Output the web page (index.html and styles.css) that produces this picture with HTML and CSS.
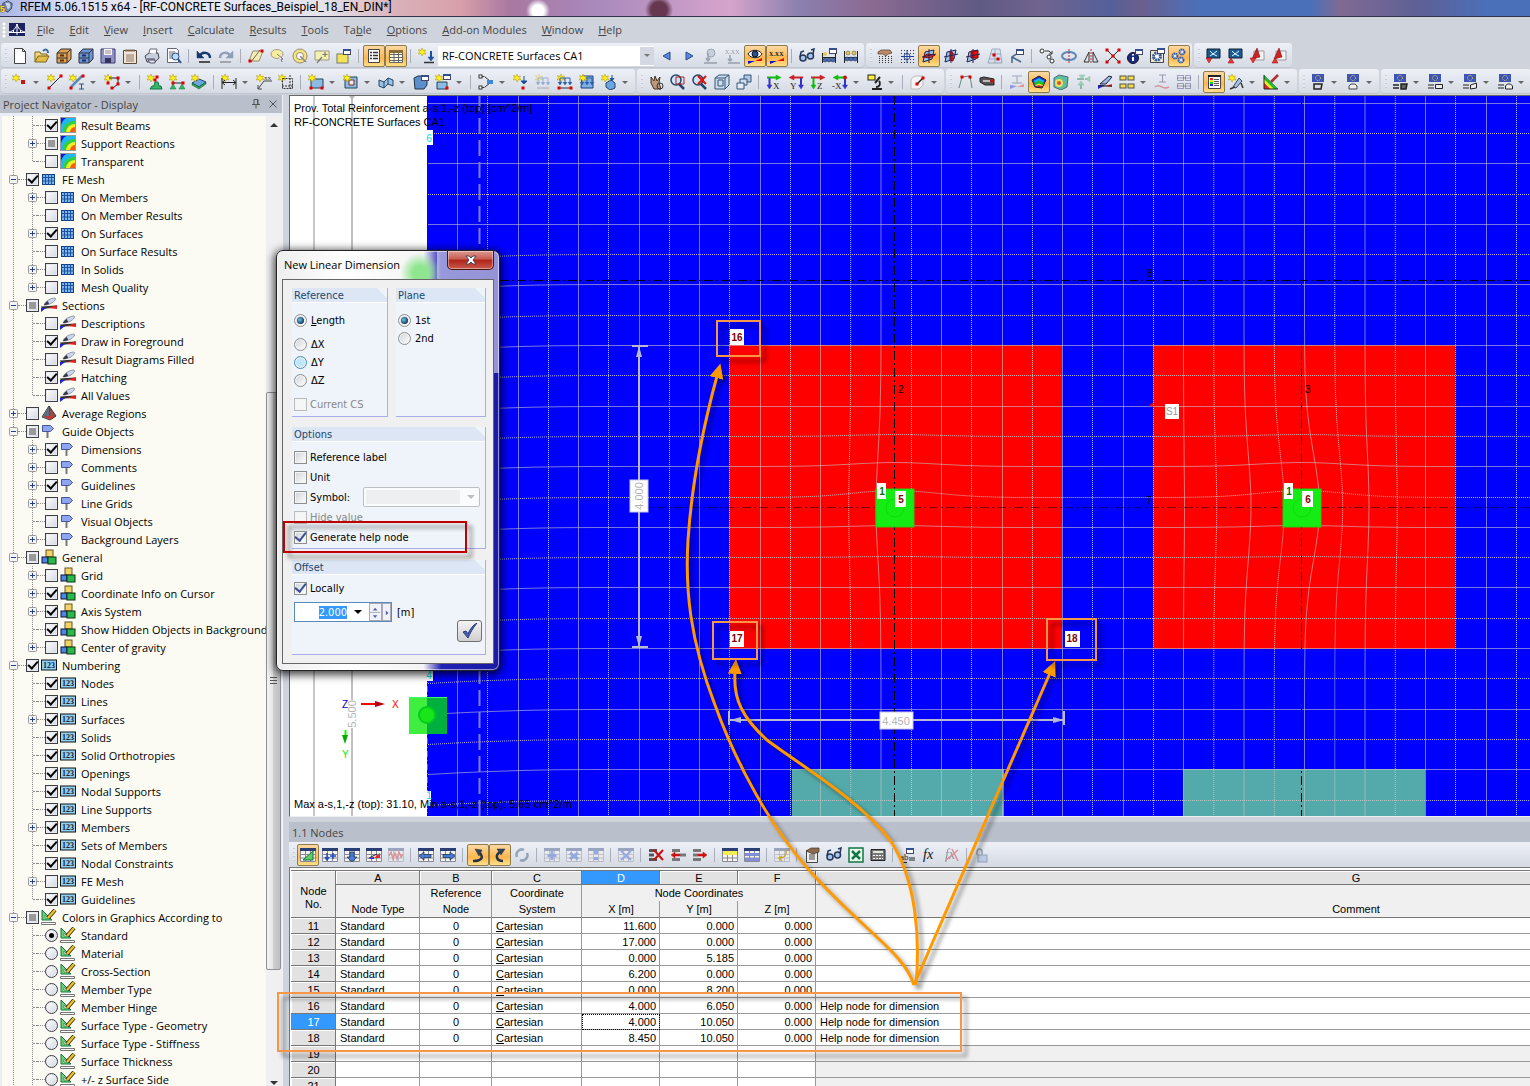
FILE: index.html
```html
<!DOCTYPE html>
<html lang="en">
<head>
    <meta charset="utf-8">
    <title>RFEM 5.06.1515 x64</title>
    <link rel="stylesheet" href="styles.css">
</head>
<body>
    <div class="app">
        <header class="titlebar">
            <svg class="logo" viewBox="0 0 16 16"><path d="M3 4l6-3 5 3-1 6-4 4-5-3z" fill="#6d87a8" stroke="#33475f"/><path d="M6 3l5 0 1 5-3 3z" fill="#c6d4e6"/><text x="0" y="14" class="logo-num">5</text></svg>
            <span>RFEM 5.06.1515 x64 - [RF-CONCRETE Surfaces_Beispiel_18_EN_DIN*]</span>
        </header>

        <nav class="menu">
            <span class="grip"></span>
            <svg class="menu-logo" viewBox="0 0 16 13"><rect width="16" height="13" fill="#1c2260"/><path d="M0 9.500h16M0 9C5 8 7 5 8 1c1 4 3 7 8 8M8 1v11M4.500 7v3M11.500 7v3" stroke="#fff" fill="none"/></svg>
            <a href="#"><u>F</u>ile</a>
            <a href="#"><u>E</u>dit</a>
            <a href="#"><u>V</u>iew</a>
            <a href="#"><u>I</u>nsert</a>
            <a href="#"><u>C</u>alculate</a>
            <a href="#"><u>R</u>esults</a>
            <a href="#"><u>T</u>ools</a>
            <a href="#">Ta<u>b</u>le</a>
            <a href="#"><u>O</u>ptions</a>
            <a href="#"><u>A</u>dd-on Modules</a>
            <a href="#"><u>W</u>indow</a>
            <a href="#"><u>H</u>elp</a>
        </nav>

        <div class="toolbars">
            <div class="toolbar-row">
                <div class="toolbar">
                    <span class="tools" data-icons="new open cabinet cabinetBlue save clip print preview | undo redo | selPlane selEllipse selRing selPlus selWin | *list *grid | loadcase"></span>
                    <select class="case" aria-label="Load case"><option>RF-CONCRETE Surfaces CA1</option></select>
                    <span class="tools" data-icons="prev next eyeOff xxOff *eye *xx | glasses abacusWin abacus"></span>
                </div>
                <div class="toolbar"><span class="tools" data-icons="handGrid snap *planeXY planeYZ planeXZ net wrenchWin | copyNode rotate mirror cross infoWin gearWin *gears"></span></div>
                <div class="toolbar"><span class="tools" data-icons="impBlue expBlue impRed expRed"></span></div>
            </div>
            <div class="toolbar-row">
                <div class="toolbar"><span class="tools" data-icons="node+ line member+ polygon+ | support supports slab | dim+ dimxx frame | surf+ opening+ wall+ solid boxes+ | connect+ loadNode loadMember loadLine loadSurf loadSolid+"></span></div>
                <div class="toolbar"><span class="tools" data-icons="pan zoomWin zoomOut cube cubes | axX axY axZ axNX+ scope+ | clipBox+"></span></div>
                <div class="toolbar"><span class="tools" data-icons="bent roller | section *surface solidRes arrows beamRes layout+ ibeam tables | *legend bulb+ colors+"></span></div>
                <div class="toolbar"><span class="tools" data-icons="ecA+ ecB+"></span></div>
                <div class="toolbar last"><span class="tools" data-icons="ecC+ ecD+ ecE+ ecF+"></span></div>
            </div>
        </div>

        <main class="workspace">
            <aside class="navigator">
                <div class="panel-title">
                    <h2>Project Navigator - Display</h2>
                    <button aria-label="Pin"><svg viewBox="0 0 10 10"><path d="M3 .5h4v5h-4zM1 5.500h8M5 5.500v4M6.500 1v4" stroke="#555" fill="none"/></svg></button>
                    <button aria-label="Close panel"><svg viewBox="0 0 10 10"><path d="M1.500 1.500l7 7M8.500 1.500l-7 7" stroke="#555" fill="none"/></svg></button>
                </div>
                <div class="tree-box">
                    <div class="tree" id="tree"></div>
                    <div class="scrollbar">
                        <span class="up"></span>
                        <span></span>
                        <span class="thumb"><i></i></span>
                        <span></span>
                        <span class="down"></span>
                    </div>
                </div>
            </aside>

            <div class="views">
                <section class="model">
                    <svg class="scene">
                        <g transform="translate(-290 -96)">
                            <rect x="427" y="96" width="3000" height="2000" fill="#00f"/>
                            <path d="M314.500 96v2000M313.500 96v2000" stroke="#c8c8c8"/>
                            <path d="M352 96v604M352 728v1000" stroke="#c0c0c0" stroke-width="2"/>
                            <path d="M349 96h6l-3 4z" fill="#b8b8b8"/>
                            <rect x="729" y="345" width="333" height="304" fill="#f00"/>
                            <rect x="1153" y="345" width="302" height="304" fill="#f00"/>
                            <rect x="792" y="769" width="212" height="60" fill="#54aaaa"/>
                            <rect x="1183" y="769" width="242" height="60" fill="#54aaaa"/>
                            <g id="mesh"></g>
                            <path d="M479.500 96v1000" class="guide"/>
                            <path d="M427.500 660v500" stroke="#0a4" stroke-dasharray="6 3 1 3"/>
                            <path d="M894.500 96v1000M1301.500 96v1000M500 280.500h3000" class="axis"/>
                            <path d="M640 507.500h3000" class="axis faint"/>

                            <g class="dimension">
                                <path d="M639 346v301M632 346h16M632 647h16M729 720h335M729 711v14M1064 711v14" class="bar"/>
                                <path d="M639 346l-3 11h6zM639 647l-3-11h6zM730 720l11-3v6zM1064 720l-11-3v6z"/>
                                <rect x="630" y="480" width="18" height="32"/>
                                <rect x="880" y="712" width="33" height="17"/>
                                <text x="896" y="725">4.450</text>
                                <text x="0" y="0" transform="translate(643 496) rotate(-90)">4.000</text>
                                <text x="0" y="0" transform="translate(356 714) rotate(-90)">5.500</text>
                            </g>

                            <g class="column">
                                <rect x="876" y="489" width="38" height="38"/>
                                <rect x="1283" y="489" width="38" height="38"/>
                                <circle cx="895" cy="508" r="9"/>
                                <circle cx="1302" cy="508" r="9"/>
                            </g>
                            <rect x="409" y="697" width="38" height="37" fill="#3fee3f"/>
                            <rect x="427" y="697" width="20" height="37" fill="#00b03f"/>
                            <path d="M409 697.500h38" stroke="#3f6"/>
                            <circle cx="427" cy="715" r="8" fill="#19e619" stroke="#0c2" stroke-width="2"/>

                            <g class="tag">
                                <rect x="730" y="329" width="14" height="16"/><text x="737" y="341">16</text>
                                <rect x="730" y="631" width="14" height="16"/><text x="737" y="642">17</text>
                                <rect x="1065" y="631" width="15" height="16"/><text x="1072" y="642">18</text>
                                <rect x="895" y="491" width="11" height="16"/><text x="901" y="503">5</text>
                                <rect x="1302" y="491" width="11" height="16"/><text x="1308" y="503">6</text>
                                <rect x="877" y="483" width="9" height="16"/><text x="882" y="495" class="green">1</text>
                                <rect x="1284" y="483" width="9" height="16"/><text x="1289" y="495" class="green">1</text>
                                <rect x="1165" y="404" width="14" height="15"/><text x="1172" y="415" class="gray">S1</text>
                                <rect x="426" y="130" width="7" height="15"/><text x="429" y="142" class="cyan">6</text>
                                <rect x="426" y="666" width="7" height="15"/><text x="429" y="679" class="cyan">4</text>
                                <rect x="426" y="791" width="5" height="15"/><text x="429" y="799" class="cyan">1</text>
                            </g>
                            <g class="axis-no">
                                <text x="898" y="393">2</text>
                                <text x="1305" y="393">3</text>
                                <text x="1147" y="277">8</text>
                                <text x="1146" y="504">7</text>
                            </g>
                            <path d="M1149 405l4-2v4z" fill="#f00"/>

                            <path d="M361 704h14" stroke="#f00" stroke-width="2"/>
                            <path d="M375 701l10 3-10 3z" fill="#b00"/>
                            <path d="M345.500 730v6" stroke="#0f0" stroke-width="2"/>
                            <path d="M342 735h6l-3 9z" fill="#0a0"/>
                            <g class="axis-name">
                                <text x="342" y="708" fill="#00c">Z</text>
                                <text x="392" y="708" fill="#f00">X</text>
                                <text x="342" y="758" fill="#0e0">Y</text>
                            </g>
                            <text x="294" y="112" class="note">Prov. Total Reinforcement a-s,1,-z (top) [cm^2/m]</text>
                            <text x="294" y="126" class="note">RF-CONCRETE Surfaces CA1</text>
                            <text x="294" y="808" class="note">Max a-s,1,-z (top): 31.10, Min a-s,1,-z (top): 5.65 cm^2/m</text>
                        </g>
                    </svg>
                </section>

                <section class="nodes">
                    <div class="panel-title"><h2>1.1 Nodes</h2></div>
                    <div class="toolbar table-tools"><span class="tools" data-icons="*tRuler tAdd tDown tFlag tWave | tLeft tRight | *arcA *arcB sync | tPlus tCross tMore | tX | rowDel rowLeft rowRight | tYellow tBlue | tEdit | handList glasses excel calc | ab fx fxDel | lock"></span></div>
                    <div class="table-box">
                        <table>
                            <colgroup><col class="c-no"><col class="c-a"><col class="c-b"><col class="c-c"><col class="c-n"><col class="c-n"><col class="c-n"><col class="c-g"></colgroup>
                            <thead>
                                <tr class="letters">
                                    <th rowspan="3" class="no-head">Node<br>No.</th>
                                    <th>A</th><th>B</th><th>C</th><th class="current">D</th><th>E</th><th>F</th><th>G</th>
                                </tr>
                                <tr class="names"><th></th><th>Reference</th><th>Coordinate</th><th colspan="3">Node Coordinates</th><th></th></tr>
                                <tr class="names"><th>Node Type</th><th>Node</th><th>System</th><th>X [m]</th><th>Y [m]</th><th>Z [m]</th><th>Comment</th></tr>
                            </thead>
                            <tbody id="rows"></tbody>
                        </table>
                    </div>
                </section>
            </div>
        </main>

        <form class="dialog">
            <div class="dialog-title">
                <h1>New Linear Dimension</h1>
                <button type="button" class="close" aria-label="Close"><svg viewBox="0 0 12 10"><path d="M1 1h3l2 2 2-2h3l-3 4 3 4h-3l-2-2-2 2h-3l3-4z" fill="#fff" stroke="#445"/></svg></button>
            </div>
            <div class="dialog-body">
                <div class="pair">
                    <fieldset>
                        <legend>Reference</legend>
                        <label><input type="radio" name="ref" checked> <span><u>L</u>ength</span></label>
                        <label class="spaced"><input type="radio" name="ref"> ΔX</label>
                        <label><input type="radio" name="ref" class="hot"> ΔY</label>
                        <label><input type="radio" name="ref"> ΔZ</label>
                        <label class="spaced off"><input type="checkbox" disabled> Current CS</label>
                    </fieldset>
                    <fieldset>
                        <legend>Plane</legend>
                        <label><input type="radio" name="plane" checked> 1st</label>
                        <label><input type="radio" name="plane"> 2nd</label>
                    </fieldset>
                </div>
                <fieldset class="options">
                    <legend>Options</legend>
                    <label><input type="checkbox"> Reference label</label>
                    <label><input type="checkbox"> Unit</label>
                    <div class="symbol">
                        <label><input type="checkbox"> Symbol:</label>
                        <select aria-label="Symbol" disabled></select>
                    </div>
                    <label class="off"><input type="checkbox" disabled> Hide value</label>
                    <label><input type="checkbox" checked> Generate help node</label>
                </fieldset>
                <fieldset class="offset">
                    <legend>Offset</legend>
                    <label><input type="checkbox" checked> Locally</label>
                    <div class="value">
                        <div class="value-box">
                            <input type="text" id="offset" value="2.000" aria-label="Offset">
                            <button type="button" class="drop" aria-label="Offset list"><svg viewBox="0 0 8 4"><path d="M0 0h8l-4 4z"/></svg></button>
                            <button type="button" class="spin" aria-label="Step offset"><svg viewBox="0 0 11 16"><path d="M0 8h11" stroke="#aab"/><path d="M3 6h5l-2.500-3zM3 11h5l-2.500 3z" fill="#5566a8"/></svg></button>
                            <button type="button" class="spin next" aria-label="More"><svg viewBox="0 0 8 16"><path d="M3 6v5l3-2.500z" fill="#5566a8"/></svg></button>
                        </div>
                        <span>[m]</span>
                    </div>
                    <button type="submit" class="ok" aria-label="OK"><svg viewBox="0 0 16 16"><path d="M1 9l3-1 2 3C8 6 11 2 15 0 11 5 8 10 6 15z" fill="#4763b8" stroke="#25387e"/></svg></button>
                </fieldset>
            </div>
        </form>

        <!-- callouts over the model, the dialog and the table -->
        <svg class="callouts">
            <defs>
                <marker id="head" markerUnits="userSpaceOnUse" markerWidth="16" markerHeight="16" refX="2" refY="7" orient="auto"><path d="M0 0l15 7-15 7z" fill="#f90"/></marker>
            </defs>
            <g class="arrows">
                <path d="M914 985C905 955 870 935 820 882C770 830 735 760 715 705C690 640 685 590 688 540C692 480 705 420 717 376"/>
                <path d="M916 985C920 940 917 880 890 840C860 800 800 765 767 740C743 718 733 700 735 672"/>
                <path d="M914 985L1050 673"/>
            </g>
            <g class="frames">
                <rect x="717" y="321" width="43" height="35"/>
                <rect x="713" y="622" width="44" height="37"/>
                <rect x="1047" y="619" width="49" height="41"/>
                <rect x="278" y="993" width="683" height="58"/>
                <rect x="284" y="522" width="182" height="30" class="red"/>
            </g>
        </svg>
    </div>

    <script src="script.js"></script>
</body>
</html>
```

FILE: styles.css
```css
* {
    box-sizing: border-box;
}

body {
    margin: 0;
    font-family: "Open Sans", "Noto Sans", sans-serif;
    font-size: 11px;
    color: #000;
    background: #cfd3dc;
}

button {
    padding: 0;
    border: 0;
    background: none;
}

h1, h2 {
    margin: 0;
    font-size: 11px;
    font-weight: normal;
}

.app {
    position: relative;
    display: flex;
    flex-direction: column;
    height: 100vh;
    overflow: hidden;
}

/* title and menu */
.titlebar {
    display: flex;
    align-items: center;
    gap: 6px;
    height: 17px;
    padding-bottom: 2px;
    border-bottom: 1px solid #333350;
    font: 12px/14px Roboto, "Open Sans", sans-serif;
    white-space: nowrap;
    background:
        radial-gradient(circle at 538px 11px, #fff 0, #fff 6px, transparent 12px),
        radial-gradient(circle at 659px 10px, #653850 0, #653850 8px, transparent 14px),
        linear-gradient(90deg, #a9b4e6 0, #d5d9f3 60px, #e6e8f4 120px, #e4e4ec 320px, #d9b0b8 400px, #d9a0aa 460px, #a878a0 510px, #a98abd 600px, #d6a4cc 730px, #8a80ae 800px, #8c6a92 870px, #5f5a84 980px, #70648f 1040px, #54609a 1110px, #6a5f8c 1140px, #4a70ba 1200px, #4a70ba 1310px, #7f6a93 1340px, #5e6096 1420px, #4a70ba 1490px);
}

.logo {
    width: 14px;
    height: 14px;
}

.logo-num {
    font: bold 10px "Liberation Sans", sans-serif;
    fill: #fd3;
    stroke: #652;
    stroke-width: 1px;
    paint-order: stroke;
}

.menu {
    display: flex;
    align-items: center;
    gap: 15px;
    height: 25px;
}

.menu a {
    color: #444;
    text-decoration: none;
}

.menu-logo {
    width: 16px;
    height: 13px;
    margin: 0 -3px 0 -14px;
}

.grip {
    width: 8px;
    height: 16px;
    background: radial-gradient(circle at 4px 2px, #fff 0, #fff 1px, transparent 2px) 0 0 / 8px 4px;
}

/* toolbars */
.toolbar-row {
    display: flex;
    gap: 2px;
    height: 26px;
    padding: 1px 0 0 1px;
}

.toolbar {
    display: flex;
    align-items: center;
    height: 25px;
    padding-right: 2px;
    border-radius: 3px;
    background: linear-gradient(#edf0f7, #d5dae3);
    box-shadow: inset 0 -1px #bec3ce;
}

.toolbar::before {
    content: "";
    width: 8px;
    height: 16px;
    background: linear-gradient(#fff, #b4b9c6) 4px 0 / 2px 2px no-repeat, linear-gradient(#fff, #b4b9c6) 4px 4px / 2px 2px no-repeat, linear-gradient(#fff, #b4b9c6) 4px 8px / 2px 2px no-repeat, linear-gradient(#fff, #b4b9c6) 4px 12px / 2px 2px no-repeat;
}

.toolbar.last {
    flex: 1;
}

.tools {
    display: flex;
    align-items: center;
}

.tool {
    display: flex;
    align-items: center;
    justify-content: center;
    width: 22px;
    height: 22px;
    border-radius: 2px;
}

.tool svg, .row svg {
    flex: none;
    width: 16px;
    height: 16px;
}

.tool.active {
    border: 1px solid #8f7a4a;
    background: linear-gradient(#fbd9a5, #ffb64c 60%, #ffe08c);
}

.arrow {
    width: 13px;
    height: 22px;
}

.arrow svg {
    width: 6px;
    height: 3px;
    display: block;
    margin: 2px 0 0 2px;
}

.sep {
    width: 1px;
    height: 14px;
    margin: 0 4px 0 3px;
    background: #a9aeba;
}

.case {
    width: 216px;
    height: 20px;
    margin: 0 2px 0 1px;
    padding: 0 4px;
    border: 0;
    appearance: none;
    font: inherit;
    color: #000;
    background: url("data:image/svg+xml,%3Csvg xmlns='http://www.w3.org/2000/svg' width='15' height='20'%3E%3Crect x='1' y='1' width='14' height='18' fill='%23d4d8e2'/%3E%3Cpath d='M5 8h6l-3 3z' fill='%23777'/%3E%3C/svg%3E") right no-repeat #fff;
}

/* workspace */
.workspace {
    flex: 1;
    display: grid;
    grid-template-columns: 283px minmax(0, 1fr);
    gap: 6px;
    min-height: 0;
    padding-top: 1px;
}

.panel-title {
    display: flex;
    flex: none;
    align-items: center;
    gap: 7px;
    height: 18px;
    padding: 0 4px 0 3px;
    background: #bac0cb;
    color: #444;
}

.panel-title h2 {
    flex: 1;
}

.panel-title button {
    width: 10px;
    height: 10px;
    line-height: 0;
}

.navigator {
    display: flex;
    flex-direction: column;
    min-height: 0;
    border-right: 1px solid #f0f2f8;
    background: #e9edf5;
}

.tree-box {
    display: flex;
    flex: 1;
    min-height: 0;
    margin: 3px 1px 0 2px;
}

.tree {
    flex: 1;
    min-width: 0;
    overflow: hidden;
    background: #fbfbf3;
}

.row {
    --dots: repeating-linear-gradient(#888 0 1px, transparent 1px 2px);
    display: flex;
    align-items: center;
    height: 18px;
    padding-left: 26px;
    white-space: nowrap;
    background: var(--dots) 11px 0 / 1px 100% no-repeat, var(--dots) 30px 0 / 1px 100% no-repeat;
}

.row.top {
    padding-left: 7px;
    background: var(--dots) 11px 0 / 1px 100% no-repeat;
}

.row.end {
    background: var(--dots) 11px 0 / 1px 100% no-repeat, var(--dots) 30px 0 / 1px 10px no-repeat;
}

.row::before {
    content: "";
    order: 1;
    flex: none;
    width: 8px;
    border-top: 1px dotted #888;
}

.row > .exp {
    flex: none;
    width: 9px;
    height: 9px;
    line-height: 0;
}

.row > .exp svg {
    width: 9px;
    height: 9px;
}

.row > .stub {
    flex: none;
    width: 4px;
    margin-left: 5px;
    border-top: 1px dotted #888;
}

.row input {
    order: 2;
}

.row svg.pic {
    order: 3;
    margin: 0 5px 0 2px;
}

.row label {
    order: 4;
}

.row input {
    appearance: none;
    flex: none;
    display: grid;
    place-items: center;
    width: 13px;
    height: 13px;
    margin: 0;
    border: 1px solid #3c3f44;
    background: linear-gradient(135deg, #fff, #d3d7e2);
    box-shadow: inset 0 0 0 1px #e8eaf0;
}

.row input[type="radio"] {
    border-radius: 50%;
}

.row input[type="radio"]:checked::after {
    content: "";
    width: 5px;
    height: 5px;
    border-radius: 50%;
    background: #000;
}

.row input[type="checkbox"]:checked::after {
    content: "";
    width: 8px;
    height: 4px;
    margin-top: -3px;
    border: solid #000;
    border-width: 0 0 2px 2px;
    transform: rotate(-48deg);
}

.row input.mixed::after {
    content: "";
    width: 7px;
    height: 7px;
    background: #999;
}

.scrollbar {
    display: grid;
    grid-template-rows: 17px 258fr 575fr 108fr 7px;
    width: 15px;
    background: #f0f0f0;
}

.up, .down {
    justify-self: center;
    align-self: center;
    border: solid transparent;
    border-width: 0 4px 4px;
    border-bottom-color: #333;
}

.down {
    border-width: 4px 4px 0;
    border-top-color: #333;
}

.thumb {
    display: grid;
    place-items: center;
    border: 1px solid #8e9196;
    border-radius: 2px;
    background: linear-gradient(90deg, #f4f4f4, #e6e6e6 45%, #cfcfd2 50%, #bfc0c4);
}

.thumb i {
    width: 7px;
    height: 8px;
    background: repeating-linear-gradient(#555 0 1px, transparent 1px 3px);
}

.views {
    display: grid;
    grid-template-rows: minmax(0, 1fr) 264px;
    gap: 5px;
    min-height: 0;
}

/* model view */
.model {
    border: 1px solid #666;
    border-right: 0;
    border-bottom-color: #eee;
    background: #fff;
    min-height: 0;
}

.scene {
    display: block;
    width: 100%;
    height: 100%;
}

#mesh path {
    fill: none;
    stroke: #c4c4c4;
    stroke-opacity: .6;
}

#mesh path.dotted {
    stroke-opacity: .95;
    stroke-dasharray: 1 1;
}

.guide {
    stroke: #8080e4;
    stroke-width: 2;
    stroke-dasharray: 16 6;
}

.axis {
    fill: none;
    stroke: #000;
    stroke-dasharray: 9 3 2 3;
}

.axis.faint {
    stroke-opacity: .5;
}

.scene text {
    font-family: "Liberation Sans", Arial, sans-serif;
    font-size: 11px;
}

.dimension path {
    fill: #b9b9d2;
}

.dimension .bar {
    stroke: #b9b9d2;
    stroke-width: 2;
}

.dimension rect {
    fill: #fff;
    stroke: #c8c8e0;
}

.dimension text {
    fill: #b4b4b4;
    text-anchor: middle;
}

.column rect {
    fill: #14ec14;
    stroke: #2cc811;
}

.column circle {
    fill: none;
    stroke: #0ddc0d;
}

.tag rect {
    fill: #fff;
}

.tag text {
    font-size: 10px;
    font-weight: bold;
    fill: #800000;
    text-anchor: middle;
}

.tag .green {
    fill: #007000;
}

.tag .gray {
    fill: #999;
    font-weight: normal;
}

.tag .cyan {
    fill: #0dd;
    font-weight: normal;
}

.scene .axis-no text, .scene .axis-name text {
    font-size: 10px;
}

/* node table */
.nodes {
    display: flex;
    flex-direction: column;
    min-width: 0;
    background: #cfd3dc;
}

.nodes .panel-title {
    height: 20px;
}

.table-tools {
    flex: none;
    height: 25px;
    border-radius: 0;
    box-shadow: none;
}

.table-box {
    flex: 1;
    min-height: 0;
    overflow: hidden;
    padding: 2px 0 0 1px;
    border: solid #777;
    border-width: 1px 0 0 1px;
    background: #fff;
}

table {
    width: 1605px;
    table-layout: fixed;
    border-collapse: separate;
    border-spacing: 0;
    font: 11px/14px "Liberation Sans", Arial, sans-serif;
}

.c-no { width: 45px; }
.c-a { width: 84px; }
.c-b { width: 72px; }
.c-c { width: 90px; }
.c-n { width: 78px; }

th, td {
    height: 16px;
    padding: 0 3px 0 4px;
    border-right: 1px solid #999;
    border-bottom: 1px solid #999;
    white-space: nowrap;
    overflow: hidden;
}

td {
    padding-top: 1px;
}

th {
    font-weight: normal;
    text-align: center;
    background: #f0f0f0;
}

.letters th {
    height: 15px;
    line-height: 12px;
    background: #e2e2e2;
    border: solid #777;
    border-width: 1px 1px 1px 0;
    box-shadow: inset 1px 1px #fff;
}

.letters th.no-head {
    line-height: 13px;
    padding-bottom: 6px;
    vertical-align: bottom;
    background: #e9e9e9;
}

.letters th.current, tbody th.current {
    background: #3399ff;
    color: #fff;
    box-shadow: none;
}

.names th {
    border-bottom: 0;
}

.names:nth-child(3) th {
    height: 17px;
    border-bottom: 1px solid #777;
}

tbody th {
    line-height: 12px;
    background: #e2e2e2;
    border-color: #777;
    box-shadow: inset 1px 1px #fff;
}

td.mid {
    text-align: center;
}

td.num {
    text-align: right;
}

td.focus {
    outline: 1px dotted #000;
    outline-offset: -1px;
}

td.empty {
    background: #f0f0f0;
}

/* dialog window */
.dialog {
    position: absolute;
    left: 276px;
    top: 250px;
    width: 224px;
    padding: 0 5px 6px;
    border: 1px solid #222;
    border-radius: 7px;
    font-family: "DejaVu Sans Condensed", "DejaVu Sans", sans-serif;
    font-size: 11px;
    background:
        radial-gradient(circle at 143px 22px, #8ee68e 0, #8ee68e 7px, transparent 20px),
        linear-gradient(#fff8, #fff8) right top / 62px 122px no-repeat,
        linear-gradient(90deg, #eee 0, #fff 30%, #f4f4f4 66%, #2222b4 74%, #1a1aa6);
    box-shadow: 0 2px 9px 2px #000b, inset 0 0 0 1px #fff8;
}

.dialog-title {
    display: flex;
    justify-content: space-between;
    align-items: flex-start;
    height: 28px;
}

.dialog-title h1 {
    padding: 6px 0 0 2px;
    font-family: "Open Sans", "Noto Sans", sans-serif;
}

.close {
    display: grid;
    place-items: center;
    width: 47px;
    height: 19px;
    border: 1px solid #4a1512;
    border-top: 0;
    border-radius: 0 0 5px 5px;
    background: linear-gradient(#dc9a92, #c95b50 45%, #b02418 50%, #c8594c);
    box-shadow: inset 0 0 0 1px #fff6;
}

.close svg {
    width: 12px;
    height: 10px;
}

.dialog-body {
    display: flex;
    flex-direction: column;
    gap: 10px;
    height: 385px;
    padding: 8px 7px 8px 9px;
    border: 1px solid #666;
    background: #f0f0f0;
}

.pair {
    display: grid;
    grid-template-columns: 96px 1fr;
    gap: 8px;
}

fieldset {
    min-width: 0;
    margin: 0;
    padding: 8px 3px 3px;
    border: solid #a9aee8;
    border-width: 0 1px 1px 0;
    background: #eff4fa;
}

legend {
    float: left;
    width: calc(100% + 6px);
    height: 15px;
    margin: -8px -3px 8px;
    padding: 0 2px;
    line-height: 15px;
    color: #24466f;
    background: #dce6f4;
    border-bottom: 1px solid #fff;
    clip-path: polygon(0 0, calc(100% - 10px) 0, 100% 10px, 100% 100%, 0 100%);
}

legend ~ * {
    clear: both;
}

fieldset label {
    display: flex;
    align-items: center;
    gap: 3px;
    height: 18px;
}

.spaced {
    margin-top: 6px;
}

.off {
    color: #888;
}

.options {
    padding-top: 5px;
    padding-bottom: 1px;
    margin-bottom: 1px;
}

.options legend {
    margin: -5px -3px 5px;
}

.options label {
    height: 20px;
}

.symbol {
    display: flex;
    justify-content: space-between;
    align-items: center;
    height: 20px;
}

.symbol select {
    width: 117px;
    height: 20px;
    margin-right: 2px;
    border: 1px solid #aaa;
    border-radius: 2px;
    appearance: none;
    background: url("data:image/svg+xml,%3Csvg xmlns='http://www.w3.org/2000/svg' width='16' height='18'%3E%3Cpath d='M4 7h8l-4 4z' fill='%23aaa'/%3E%3C/svg%3E") right no-repeat, linear-gradient(#eee, #eee) 2px 2px / 94px 14px no-repeat #fff;
}

fieldset input[type="radio"], fieldset input[type="checkbox"] {
    appearance: none;
    flex: none;
    display: grid;
    place-items: center;
    width: 13px;
    height: 13px;
    margin: 0 0 0 -1px;
    border: 1px solid #8e8f8f;
    background: linear-gradient(135deg, #cfd3d8, #fff);
    box-shadow: inset 0 0 0 1px #f4f4f4;
}

fieldset input[type="radio"] {
    border-radius: 50%;
    margin-right: 1px;
}

fieldset input[type="radio"].hot {
    border-color: #4a8cb8;
    background: #bfe6fb;
}

fieldset input[type="radio"]:checked::after {
    content: "";
    width: 7px;
    height: 7px;
    border-radius: 50%;
    background: radial-gradient(circle at 40% 40%, #6fc4ee, #123a5c 70%);
}

fieldset input[type="checkbox"]:checked::after {
    content: "";
    width: 9px;
    height: 5px;
    margin-top: -3px;
    border: solid #3b4f92;
    border-width: 0 0 2px 2px;
    transform: rotate(-52deg);
}

fieldset input:disabled {
    background: #f6f6f6;
    border-color: #bbb;
}

.offset {
    flex: 1;
    padding: 4px 3px;
}

.offset legend {
    margin: -4px -3px 4px;
}

.value {
    display: flex;
    align-items: center;
    gap: 5px;
    margin-top: 5px;
}

.value-box {
    display: flex;
    align-items: center;
    width: 98px;
    height: 20px;
    margin-left: -1px;
    border: 1px solid #5a8ab8;
    background: #fff;
}

.value-box input {
    width: 52px;
    padding: 0;
    border: 0;
    outline: 0;
    text-align: right;
    font: inherit;
    background: none;
}

.value-box input::selection {
    color: #fff;
    background: #3399ff;
}

.drop {
    width: 24px;
    height: 16px;
    line-height: 0;
}

.drop svg {
    width: 8px;
    height: 4px;
}

.spin {
    width: 13px;
    height: 18px;
    border: 1px solid #aab;
    background: #f0f2f8;
    line-height: 0;
}

.spin.next {
    width: 10px;
}

.ok {
    display: grid;
    place-items: center;
    width: 25px;
    height: 22px;
    margin: -2px 0 0 auto;
    border: 1px solid #707070;
    border-radius: 3px;
    background: linear-gradient(#f4f4f4, #e2e2e2 50%, #cfcfcf);
}

.ok svg {
    width: 16px;
    height: 16px;
}

/* callouts */
.callouts {
    position: absolute;
    inset: 0;
    width: 100%;
    height: 100%;
    pointer-events: none;
    fill: none;
}

.arrows path {
    stroke: #f90;
    stroke-width: 3;
    marker-end: url(#head);
}

.arrows {
    filter: drop-shadow(4px 4px 2px #0006);
}

.frames rect {
    stroke: #f79646;
    stroke-width: 2;
    filter: drop-shadow(5px 5px 2px #0007);
}

.frames .red {
    stroke: #c00000;
}
```

FILE: script.js
```js
// small pieces shared by several icons
const star = '<path d="M4 0l1 2.500L7.500 2 6.500 4 8 6 5.500 5.500 4 8 3 5.500 0 6 1.500 4 .5 1.500 3 2.500z" fill="#ffee20" stroke="#a89000" stroke-width=".5"/>';
const dot = (x, y) => `<rect x="${x - 1.5}" y="${y - 1.5}" width="3" height="3" fill="#d00"/>`;
const p = (d, stroke, fill = 'none', w = 1) => `<path d="${d}" stroke="${stroke}" fill="${fill}" stroke-width="${w}"/>`;
const dash = (s, a) => s.replace('/>', ` stroke-dasharray="${a}"/>`);
const win = (x, y) => `<rect x="${x}" y="${y}" width="7" height="5" fill="#fff" stroke="#446"/><path d="M${x} ${y + .5}h7" stroke="#33508f" stroke-width="2"/>`;
const sheet = p('M.5 2.500h15v12h-15zM.5 7.500h15M.5 11h15M5.500 2v12M10.500 2v12', '#889', '#f4f4ec') + '<path d="M0 1h16v3H0z" fill="#2b3f77"/>';
const load = p('M3 4v6M8 4v6M13 4v6M3 4h10', '#2a5db0') + p('M1 8l2 3 2-3M6 8l2 3 2-3M11 8l2 3 2-3', '#2a5db0', '#2a5db0', .5);
const text = (t, x, y, s = 8, c = '#222', extra = '') => `<text x="${x}" y="${y}" font-size="${s}" font-family="Liberation Serif, serif" fill="${c}" ${extra}>${t}</text>`;
const flag = '<rect x="2" width="12" height="8" fill="#3d56b4"/><circle cx="8" cy="4" r="2.500" fill="none" stroke="#e8d060" stroke-dasharray="1 1"/>';
const cab = (a, b) => p('M1 5l4-4h10v10l-4 4H1z', '#333', a) + p('M1 5h10v10M11 5l4-4M1 10h10', '#333') + p('M4 7.500h4M4 12.500h4', b, 'none', 2);
const axes = (fill, r) => p('M4 4l9-2-2 9-9 3z', '#225', '#9cc4e4') + p(r, '#800', fill) + p('M8 1v14M1 9l14-3', '#225');
const ghost = s => `<g opacity=".4">${s}</g>`;

const icons = {
    new: p('M2.500 .5h8l3 3v12h-11zM10.500 .5v3h3', '#444', '#fff'),
    open: p('M1 14V4h5l1 2h6v3', '#7a6420', '#f3dc80') + p('M1 14l3-6h11l-3 6z', '#7a6420', '#e3bd45') + p('M9 3c3-3 5-1 5 2', '#35679f', 'none', 2),
    cabinet: cab('#e0a050', '#5d3208'),
    cabinetBlue: cab('#6a94dc', '#16305f'),
    save: p('M1 1h14v14H1z', '#3c3c78', '#8f92c4') + '<path d="M4 1h8v6H4z" fill="#f4f4f4"/><path d="M5 10h6v5H5z" fill="#33335c"/><path d="M5 3h6M5 5h6" stroke="#a88"/>',
    clip: p('M1.500 2.500h13v13h-13z', '#5d4632', '#efe4d8') + p('M4 1v3M6 1v3M8 1v3M10 1v3M12 1v3M4 7h8M4 9h8M4 11h8M4 13h8', '#8d7460'),
    print: p('M1 8l4-3h9l1 5-4 4H3z', '#445', '#c9cede') + p('M5 5l1-4h7l-1 5', '#667', '#fff') + p('M3 11h8', '#445') + '<path d="M4 12h7v3H6z" fill="#e8e8f4" stroke="#556"/>',
    preview: p('M1.500 .5h9l2 2v12h-11zM3 4h6M3 6h6M3 8h5M3 10h5', '#667', '#fff') + '<circle cx="9.500" cy="8.500" r="3.500" fill="#b9dcf8" stroke="#2a5288"/>' + p('M12 11l3 4', '#2a5288', 'none', 2),
    undo: p('M4 8c2-5 10-4 10 2', '#17386e', 'none', 2.5) + p('M1 3v7h7z', '#17386e', '#17386e', .5) + p('M3 14h11', '#222', 'none', 1.5),
    redo: ghost(p('M12 8c-2-5-10-4-10 2', '#17386e', 'none', 2.5) + p('M15 3v7H8z', '#17386e', '#17386e', .5) + p('M2 14h11', '#222', 'none', 1.5)),
    selPlane: p('M5 3h10l-4 10H1z', '#987', '#f4eeb0') + p('M12 2L3 14', '#666') + dot(14, 3) + dot(2, 13),
    selEllipse: '<ellipse cx="7" cy="6" rx="6" ry="4.500" fill="#f6eda0" stroke="#a98"/>' + p('M7 6l6 5-2 0 1 3', '#777', '#eee'),
    selRing: '<circle cx="8" cy="8" r="7" fill="#f2e67a" stroke="#987"/><circle cx="8" cy="8" r="3.500" fill="#fff" stroke="#987"/>' + p('M8 8l6 6', '#888', 'none', 1.5),
    selPlus: p('M1 3h14v9H1z', '#998', '#f6f0b0') + p('M11 4v5M8.500 6.500h5M3 15l5-6', '#777', 'none', 1.2),
    selWin: '<rect x="1" y="6" width="11" height="9" fill="#f4e45a" stroke="#776"/>' + win(7.5, 1.5),
    list: p('M2.500 1.500h11v13h-11z', '#444', '#fff') + p('M4 4.500h2M4 7.500h2M4 10.500h2M7 4.500h5M7 7.500h5M7 10.500h5', '#333', 'none', 1.5),
    grid: p('M1.500 2.500h13v12h-13zM1 6.500h14M1 9.500h14M1 12.500h14M6 5v10M10.500 5v10', '#666', '#fffbe0') + '<path d="M1 2h14v3H1z" fill="#8a6b3a"/>',
    loadcase: star + p('M13 3v8', '#1c4f9d', 'none', 2) + p('M10 9l3 4 3-4z', '#1c4f9d', '#1c4f9d', .5) + p('M6 14.500h10', '#333', 'none', 1.5),
    prev: p('M11 4v8L4 8z', '#234a94', '#5e86d6'),
    next: p('M5 4v8l7-4z', '#234a94', '#5e86d6'),
    eyeOff: ghost('<circle cx="8" cy="5" r="4" fill="#9ab" stroke="#345"/>' + p('M5 5v6M3 10l2 3 2-3M1 15h13', '#345', 'none', 1.5)),
    xxOff: ghost(text('X.XX', 0, 6, 6) + p('M5 7v5M3 11l2 2 2-2M3 15h12', '#345', 'none', 1.5)),
    eye: p('M1 6c3-5 11-5 14 0-3 5-11 5-14 0z', '#123', '#fff') + '<circle cx="8" cy="6" r="3" fill="#27509c" stroke="#111"/><path d="M8 13l7-3v3z" fill="#e01010"/><path d="M1 16v-3h7z" fill="#1010d0"/>',
    xx: text('X.XX', 0, 8, 6, '#111', 'font-weight="bold"') + '<path d="M8 13l7-3v3z" fill="#e01010"/><path d="M1 16v-3h7z" fill="#1010d0"/>',
    glasses: '<circle cx="4" cy="10" r="3" fill="#a9c4ea" stroke="#23365c" stroke-width="1.500"/><circle cx="11.500" cy="8" r="3" fill="#a9c4ea" stroke="#23365c" stroke-width="1.500"/>' + p('M1 9l1-5 3-1M14 6l1-5-3 1', '#23365c', 'none', 1.5),
    abacus: p('M1.500 3v12M14.500 3v12M1 9.500h14', '#222') + '<g fill="#e9c94c" stroke="#543" stroke-width=".5"><circle cx="5" cy="5" r="2"/><circle cx="11" cy="5" r="2"/></g><g fill="#4a6cc0" stroke="#123" stroke-width=".5"><circle cx="4" cy="11" r="2"/><circle cx="8" cy="11" r="2"/><circle cx="12" cy="11" r="2"/></g>',
    abacusWin: p('M1.500 5v10M14.500 5v10M1 9.500h14', '#222') + '<g fill="#4a6cc0" stroke="#123" stroke-width=".5"><circle cx="4" cy="12" r="2"/><circle cx="8" cy="12" r="2"/><circle cx="12" cy="12" r="2"/></g><circle cx="4" cy="6" r="2" fill="#e9c94c"/>' + win(8.5, .5),
    handGrid: dash(p('M2 8.500h13M2 10.500h13M2 12.500h13M2 14.500h13', '#333'), '1 2') + p('M1 4l3-2 9 0 2 3-4 1-2 2-3-2H1z', '#553a28', '#b98a6c', .7),
    snap: dash(p('M2 2.500h13M2 5.500h13M2 8.500h13M2 11.500h13M2 14.500h13', '#333'), '1 2') + '<circle cx="8" cy="8.500" r="3" fill="#fff" stroke="#22409a"/>' + p('M8 2v13M2 8.500h12', '#22409a'),
    planeXY: axes('#e33', 'M2 9l4-3 8 1-5 3z'),
    planeYZ: axes('#e33', 'M7 3l3 2v8l-3-1z'),
    planeXZ: axes('#e11', 'M6 3h7v7H6z'),
    net: ghost(p('M5 1h8l2 14H1zM3 6h11M2 11h12M8 1v14', '#357', '#cde')) + dot(7, 7) + dot(11, 11),
    wrenchWin: p('M3 15V9l6-4M3 9l9 5', '#468', 'none', 1.5) + win(7.5, 1.5),
    copyNode: '<circle cx="3" cy="3" r="2" fill="#fff" stroke="#333"/><circle cx="10" cy="9" r="2" fill="#fff" stroke="#333"/><circle cx="13" cy="13" r="2" fill="#fff" stroke="#333"/>' + p('M6 3h4l3 3M13 3v3h-3', '#333'),
    rotate: '<ellipse cx="8" cy="8" rx="7" ry="4" fill="none" stroke="#5a86b8" stroke-width="2"/>' + dash(p('M8 1v14', '#c22'), '2 1'),
    mirror: p('M1 14l5-10v10zM15 14L10 4v10z', '#333') + dash(p('M8 1v14', '#c22'), '2 1'),
    cross: p('M2 2l12 12M14 2L2 14', '#222') + dot(2, 2) + dot(14, 2) + dot(2, 14) + dot(14, 14) + dot(8, 8),
    infoWin: '<circle cx="6" cy="10" r="5.500" fill="#1d2a80" stroke="#112"/>' + p('M6 9v4M6 6v1.500', '#fff', 'none', 2) + win(8.5, 1.5),
    gearWin: p('M1.500 2.500h13v12h-13z', '#444', '#efe6d0') + '<circle cx="8" cy="8.500" r="3.500" fill="#fff" stroke="#33599c" stroke-width="3" stroke-dasharray="2 .7"/>' + win(8.5, .5),
    gears: '<g fill="#dde6f6" stroke="#35599c" stroke-width="2" stroke-dasharray="1.500 .5"><circle cx="4" cy="8" r="2.500"/><circle cx="11" cy="4" r="2.500"/><circle cx="10" cy="12" r="2.500"/></g>',
    impBlue: p('M2 1h13v9H2z', '#123', '#1c5a94') + p('M5 3l3 3-3 2M12 3L8 6l4 2', '#dff') + p('M1 10h6l-3 5z', '#900', '#e33', .5),
    expBlue: p('M2 1h13v9H2z', '#123', '#1c5a94') + p('M5 3l3 3-3 2M12 3L8 6l4 2', '#dff') + p('M1 15h6l-3-5z', '#900', '#e33', .5),
    impRed: p('M5 3h10v9H5z', '#999', '#f4f4f4') + p('M8 0l3 9-8 2z', '#700', '#c22', .5) + p('M1 10h6l-3 5z', '#900', '#e33', .5),
    expRed: p('M5 3h10v9H5z', '#999', '#f4f4f4') + p('M8 0l3 9-8 2z', '#700', '#c22', .5) + p('M1 15h6l-3-5z', '#900', '#e33', .5),

    node: star + '<rect x="9" y="6" width="4" height="4" fill="#d01010"/>',
    line: star + p('M2 14L14 2', '#222') + dot(2, 14) + dot(14, 2),
    member: star + p('M2 13L13 2', '#5a8ab8', 'none', 2.5) + dot(2, 14) + dot(14, 2) + p('M10 10h5M10 15h5M12.500 10v5', '#357'),
    polygon: star + p('M5 4h9v6l-5 4', '#222') + dot(14, 4) + dot(14, 10) + dot(8, 14) + dot(4, 9),
    support: star + p('M3 15l2-3h2l1-4h3l1 4h2l1 3z', '#174', '#35b765') + dot(10, 3) + dot(8, 6),
    supports: star + p('M4 9h9', '#222') + p('M1 15l3-5 3 5zM10 15l3-5 3 5z', '#174', '#35b765', .5) + dot(4, 9) + dot(14, 9),
    slab: p('M1 9l7-4 7 3-7 5z', '#246', '#6aa6e0') + p('M1 11l7 4 7-5v-2l-7 5-7-4z', '#153', '#2fa84f', .5) + star,
    dim: star + p('M1 8.500h14M1 4v11M15 4v11M4 6L1 8.500 4 11M12 6l3 2.500-3 2.500', '#222'),
    dimxx: star + text('XX', 8, 6, 5) + p('M2 15l6-8h8M2 11v4h4', '#444'),
    frame: star + dash(p('M4.500 4.500h10v10h-10zM12 1v14M4 12h12', '#333'), '2 1'),
    surf: p('M3 5h12v9H3z', '#245', '#8dbbe6') + star + dot(14, 14) + dot(3, 14),
    opening: p('M2 3h12v11H2z', '#245', '#8dbbe6') + p('M6 6h5v5H6z', '#822', '#eee') + star,
    wall: p('M1 6l5 2 4-4 5 2v6l-5-2-4 4-5-2z', '#246', '#9cc4e4') + p('M6 8v6M10 4v6', '#246'),
    solid: p('M1 4l4-2h9v9l-3 4H2z', '#234', '#5b8fcb') + win(8.5, 1.5),
    boxes: p('M2 8h10v7H2z', '#245', '#8dbbe6') + win(8.5, .5) + star + dot(12, 14),
    connect: p('M1.500 2.500h5M1.500 13.500h5M7 3l5 4M7 13l5-4', '#333') + '<rect x="9" y="6" width="6" height="4" fill="#3b86d8"/><rect x="1" y="1" width="3" height="3" fill="#fff" stroke="#333"/><rect x="1" y="12" width="3" height="3" fill="#fff" stroke="#333"/>',
    loadNode: star + p('M11 2v7M8 7l3 3 3-3z', '#1c4f9d', '#1c4f9d') + dot(10, 14),
    loadMember: ghost(star + load) + p('M2 14h12', '#aaa'),
    loadLine: star + load + p('M2 14h12', '#333') + dot(2, 14) + dot(14, 14),
    loadSurf: p('M3 2h11v12H2z', '#1c3f7d', '#7fb0e4') + load + star,
    loadSolid: star + p('M5 9l5-3 4 3v5l-5 2-4-3z', '#246', '#6aa6e0') + p('M11 1v5M9 4l2 3 2-3', '#1c4f9d', '#1c4f9d'),

    pan: p('M3 3l3 4 1-5 2 5 3-4-1 6 2 6H6L3 9z', '#432', '#b9987c') + '<circle cx="12" cy="12" r="3" fill="none" stroke="#333"/>',
    zoomWin: '<circle cx="6" cy="6" r="5" fill="#cfe4f8" stroke="#246" stroke-width="1.500"/>' + p('M9 10l5 5', '#246', 'none', 2.5) + p('M6 3h8v7H6z', '#a22'),
    zoomOut: '<circle cx="6" cy="6" r="5" fill="#cfe4f8" stroke="#246" stroke-width="1.500"/>' + p('M9 10l5 5', '#246', 'none', 2.5) + p('M6 2l8 8M14 2L6 10', '#d11', 'none', 2),
    cube: p('M1 4l4-3h10v10l-4 4H1z', '#357', '#cfdcec') + p('M1 4h10v11M11 4l4-3M4 6h5v6H4z', '#357'),
    cubes: p('M8 1h7v7H8z', '#357', '#b0c8e4') + p('M4 5h7v6H4z', '#357', '#cfdcec') + p('M1 9h7v6H1z', '#357', '#e4ecf6'),
    axX: p('M1 3.500h10', '#1b1', 'none', 2) + p('M10 1l5 2.500-5 2.500z', '#1b1', '#1b1', .5) + p('M3.500 4v8', '#33c', 'none', 2) + p('M1 11h5l-2.500 4z', '#33c', '#33c', .5) + text('X', 7, 15, 9),
    axY: p('M5 3.500h10', '#c22', 'none', 2) + p('M6 1L1 3.500 6 6z', '#c22', '#c22', .5) + p('M13 4v8', '#33c', 'none', 2) + p('M10.500 11h5L13 15z', '#33c', '#33c', .5) + text('Y', 2, 15, 9),
    axZ: p('M1 3.500h10', '#c22', 'none', 2) + p('M10 1l5 2.500-5 2.500z', '#c22', '#c22', .5) + p('M3.500 4v8', '#1b1', 'none', 2) + p('M1 11h5l-2.500 4z', '#1b1', '#1b1', .5) + text('Z', 7, 15, 9),
    axNX: p('M5 3.500h8', '#1b1', 'none', 2) + p('M6 1L1 3.500 6 6z', '#1b1', '#1b1', .5) + p('M13 4v8', '#33c', 'none', 2) + p('M10.500 11h5L13 15z', '#33c', '#33c', .5) + '<circle cx="13" cy="3.500" r="2" fill="#c11"/>' + text('-X', 0, 15, 9),
    scope: '<rect x="1" y="1" width="7" height="5" fill="#ffef3a" stroke="#222"/>' + p('M13 3l-5 6M9 13c4 0 5-4 3-6M5 15h10', '#222', 'none', 2),
    clipBox: p('M1 5l4-3h8v9l-4 4H1z', '#bbb', '#f4f4f4') + p('M7 10l6-6', '#222', 'none', 1.5) + dot(7, 10) + dot(13, 4),
    bent: p('M2 14L5 3l8-1 2 12', '#687') + dot(5, 3) + dot(13, 3),
    roller: p('M1 4l4-1 10 2v6H6L1 8z', '#222', '#555') + '<rect x="4" y="6" width="7" height="2" fill="#bbb"/>' + dot(13, 7),
    section: ghost(p('M3 2h10M3 9h10M8 2v7', '#346') + '<path d="M1 15v-4l7 1z" fill="#22d"/><path d="M8 13l7-3v3z" fill="#e22"/>'),
    surface: '<path d="M1 6l7-4 7 4-4 8-7-1z" fill="#1a30e0" stroke="#222"/><path d="M2.500 7l5.500-3 5.500 3-2 3-3-1-4 1z" fill="#18b0f0"/><path d="M3 9l5-2.500L13 9l-1 2-4-1-4 1z" fill="#20c020"/><path d="M4 11l4-1.500 4 1.500-.5 1L8 11.500 4.500 12z" fill="#f0e020"/><path d="M4.500 12.500l3.500-1 3.500 1-.5 1z" fill="#e02010"/>',
    solidRes: '<path d="M1 4l5-3 9 2-1 10-6 3-7-3z" fill="#5cc0a0" stroke="#567"/><circle cx="6" cy="9" r="4" fill="#f0e060"/><circle cx="6" cy="9" r="2" fill="#e05030"/>',
    arrows: ghost(p('M2 5h7M13 5h-3M6 15V9', '#174', 'none', 2) + p('M3 11l3-4 3 4zM15 2v6l-4-3zM4 1l3 4 3-4z', '#174', '#3b6', .5)),
    beamRes: p('M3 10L12 2l3 1-6 7z', '#223', '#9bb8e8') + '<path d="M1 15v-4l8 0z" fill="#22d"/><path d="M8 12l7-2v3z" fill="#e22"/>' + p('M1 12h14', '#222'),
    layout: '<g fill="#f4dc50" stroke="#554"><rect x="1" y="2" width="6" height="4"/><rect x="9" y="2" width="6" height="4"/><rect x="1" y="10" width="6" height="4"/><rect x="9" y="10" width="6" height="4"/></g>',
    ibeam: ghost(p('M5 1h7M5 8h7M8.500 1v7', '#225') + p('M1 13c5-5 7 4 14 0', '#c22', 'none', 1.5)),
    tables: ghost(p('M1.500 1.500h6v5h-6zM9.500 1.500h5v5h-5zM1.500 9.500h6v5h-6zM9.500 9.500h5v5h-5zM1 4h14M1 12h14', '#336')),
    legend: p('M2.500 1.500h12v13h-12z', '#444', '#fff') + '<path d="M4 4h3v2H4z" fill="#e22"/><path d="M4 6h3v2H4z" fill="#ee2"/><path d="M4 8h3v2H4z" fill="#2c2"/><path d="M4 10h3v2H4z" fill="#22e"/><path d="M2 1h13v2H2z" fill="#222"/>' + p('M8 5.500h5M8 7.500h5M8 9.500h5M8 11.500h5', '#555'),
    bulb: star + p('M5 13L11 4l3 3-6 7z', '#345', '#a9c0e4') + p('M2 15l5-2M13 9l2 5', '#333', 'none', 1.5),
    colors: '<path d="M1 1v14h14z" fill="#22c"/><path d="M1 1l14 14H9L1 7z" fill="#2b2"/><path d="M1 5l10 10H7L1 9z" fill="#ee2"/><path d="M1 9l6 6H1z" fill="#e22"/>' + p('M1 1v14h14', '#222') + p('M15 1L8 8', '#a33', 'none', 2.5),
    ecA: flag + p('M4 15v-5h8l-1 5z', '#222', '#ddd', 1.5),
    ecB: flag + p('M4 15v-3l2-2h4l2 2v3z', '#444', '#eee'),
    ecC: flag + p('M1 11h6M1 14h6M9 15v-5h6l-1 5z', '#222', '#666', 1.5),
    ecD: flag + p('M1 11h6M1 14h6M8.500 14.500v-4h7v4z', '#222', '#eee'),
    ecE: flag + p('M1 11h6M1 14h6M8.500 15v-4l6-2v5z', '#222', '#eee'),
    ecF: flag + p('M1 11h6M1 14h6M8.500 15v-3l2-2h3l2 2v3z', '#222', '#eee'),

    tRuler: sheet + p('M3 13L13 4v9z', '#174', '#6c6'),
    tAdd: sheet + p('M5 6v6M3 10l2 3 2-3M11 6v6M8 9h6', '#1c4fbd', 'none', 1.5),
    tDown: sheet + p('M6 5h4v5h3l-5 5-5-5h3z', '#134', '#4a78d8', .7),
    tFlag: sheet + p('M3 11l8-4', '#223') + '<path d="M8 11l6-5v5z" fill="#e22"/><path d="M2 12l6-2v2z" fill="#22d"/>',
    tWave: ghost(sheet + p('M1 9l2-4 2 7 2-6 2 6 2-7 2 5 2-3', '#c22', 'none', 1.5)),
    tLeft: sheet + p('M1 9l5-4v2.500h7v3H6V13z', '#134', '#4a78d8', .7),
    tRight: sheet + p('M15 9l-5-4v2.500H3v3h7V13z', '#134', '#4a78d8', .7),
    arcA: p('M3 14c8 0 11-3 7-8', '#234', 'none', 2.5) + p('M5 2l7 1-3 6z', '#234', '#345', .5),
    arcB: p('M11 14C4 14 3 8 8 5', '#234', 'none', 2.5) + p('M5 2h8l-4 6z', '#234', '#345', .5),
    sync: ghost(p('M3 10C1 5 6 1 10 3M13 6c2 5-3 9-7 7', '#246', 'none', 2.5)),
    tPlus: ghost(sheet + p('M8 4v9M3.500 8.500h9', '#25c', 'none', 3)),
    tCross: ghost(sheet + p('M4 6l8 6M12 6l-8 6', '#25c', 'none', 3)),
    tMore: ghost(sheet + p('M8 4v3M8 10v3', '#25c', 'none', 4)),
    tX: ghost(sheet + p('M3 4l10 9M13 4L3 13', '#25c', 'none', 2)),
    rowDel: p('M1 3.500h8M1 8h5M1 12.500h8', '#555', 'none', 3) + p('M6 3l9 10M15 3L6 13', '#c11', 'none', 2),
    rowLeft: p('M2 3.500h8M10 8h6M2 12.500h8', '#777', 'none', 3) + p('M1 8l4-3v2h5v2H5v2z', '#c11', '#c11', .5),
    rowRight: p('M1 3.500h8M1 8h5M1 12.500h8', '#777', 'none', 3) + p('M15 8l-4-3v2H6v2h5v2z', '#c11', '#c11', .5),
    tYellow: sheet + '<path d="M1 4h14v4H1z" fill="#f4ee50"/>',
    tBlue: sheet + '<path d="M1 6h14v3H1zM1 11h14v3H1z" fill="#8090d8"/>',
    tEdit: ghost(sheet) + p('M12 3c1 5-2 8-6 8M8 9l-3 2 3 3', '#c9a820', 'none', 1.5),
    handList: p('M2.500 3.500h11v12h-11zM5 8h6M5 10h6M5 12h6', '#444', '#eee') + p('M2 4l5-3 8 0v4l-6 2z', '#432', '#8c6a50', .7),
    excel: p('M1 1h14v14H1z', '#174', '#eefaee', 1.5) + p('M4 4l8 8M12 4l-8 8', '#174', 'none', 2.5),
    calc: p('M1 2.500h14v11H1z', '#222', '#777') + '<path d="M3 4h10v2H3z" fill="#dfe8df"/>' + dash(p('M3 8.500h10M3 11.500h10', '#fff'), '2 1'),
    ab: text('ab', 0, 13, 9) + p('M9 11h6M9 13h6M2 15.500h5', '#222') + win(6.5, 1.5),
    fx: text('fx', 1, 12, 14, '#111', 'font-style="italic"'),
    fxDel: ghost(text('fx', 1, 12, 14, '#111', 'font-style="italic"') + p('M8 2l6 12M14 3L2 13', '#c11', 'none', 1.5)),
    lock: ghost('<rect x="4" y="8" width="9" height="7" fill="#8ba8e0" stroke="#246"/>' + p('M3 8V5c0-4 5-4 5 0v3', '#246', 'none', 1.5)),

    // navigator
    result: '<rect x="1" y="1" width="14" height="14" fill="#1010f0"/><path d="M1 15V8a10 10 0 0 1 14-7v14z" fill="#20b8f0"/><path d="M3 15A11 11 0 0 1 15 4v11z" fill="#30d040"/><path d="M6 15a9 9 0 0 1 9-8v8z" fill="#f0f020"/><path d="M10 15a6 6 0 0 1 5-5v5z" fill="#f06010"/><rect x=".5" y=".5" width="15" height="15" fill="none" stroke="#999"/>',
    mesh: '<rect x="1.500" y="3.500" width="12" height="10" fill="#7db6ea" stroke="#123e80"/>' + p('M1 6.500h13M1 10h13M4.500 3v11M7.500 3v11M10.500 3v11', '#1d52a0'),
    sect: '<path d="M3 8c1-4 7-7 11-7 2 1-2 6-9 7z" fill="#c9d8f0" stroke="#778" stroke-width=".7"/><path d="M3 8c1-2 2-3 4-4l1 3-3 1z" fill="#334"/><path d="M0 9.500l15-1v2L1 12z" fill="#333"/><path d="M7 11l9-3v4z" fill="#e02020"/><path d="M0 15v-4l5 0z" fill="#2020d8"/>',
    pyramid: p('M8 1l7 10-6 4-8-3z', '#333', '#9a4a4a') + p('M8 1l1 14', '#333') + '<path d="M8 1l1 14-8-3z" fill="#5b6f80"/><path d="M3 11l10 0-4 4z" fill="#c33"/>',
    sign: p('M6.500 9v6', '#777', 'none', 2) + p('M1.500 2.500h8l3 3-3 3h-8z', '#44559c', '#8ea6f0'),
    cubesColor: '<rect x="5" y="1" width="7" height="7" fill="#f2d368" stroke="#665522"/><rect x="1" y="8" width="6" height="6" fill="#4a86e8" stroke="#113"/><rect x="7" y="8" width="8" height="7" fill="#28b84c" stroke="#131"/>',
    numbers: '<rect x=".5" y="3" width="15" height="10" fill="#8fd0f4" stroke="#111"/>' + text('123', 2, 11, 8, '#123', 'font-weight="bold"'),
    ruler: p('M1 1v10h10z', '#174', '#6fd06f') + p('M4 6v3h3z', '#174', '#fff', .6) + p('M14 1L7 9', '#222', 'none', 4) + p('M14 1L7 9', '#f0c020', 'none', 2.5) + p('M.5 13.500h14v2H.5z', '#777', '#fff')
};

const svg = (name, cls = '') => `<svg class="${cls}" viewBox="0 0 16 16">${icons[name]}</svg>`;

// toolbars: "*" marks a pressed button, a trailing "+" a drop-down arrow
document.querySelectorAll('.tools').forEach(box => {
    box.innerHTML = box.dataset.icons.split(' ').map(item => {
        if (item === '|') return '<span class="sep"></span>';
        const name = item.replace(/[*+]/g, '');
        let out = `<button class="tool${item[0] === '*' ? ' active' : ''}" aria-label="${name}">${svg(name)}</button>`;
        if (item.endsWith('+')) out += `<button class="arrow" aria-label="${name} menu"><svg viewBox="0 0 6 3"><path d="M0 0h6L3 3z" fill="#666"/></svg></button>`;
        return out;
    }).join('');
});

// tree lines: level, expander, state (x checked, o empty, m mixed, r/R radio), icon, label
const tree = `
2 . x result Result Beams
2 + m result Support Reactions
2 . o result Transparent
1 - x mesh FE Mesh
2 + o mesh On Members
2 . o mesh On Member Results
2 + x mesh On Surfaces
2 . o mesh On Surface Results
2 + o mesh In Solids
2 + o mesh Mesh Quality
1 - m sect Sections
2 . o sect Descriptions
2 . x sect Draw in Foreground
2 . o sect Result Diagrams Filled
2 . x sect Hatching
2 . o sect All Values
1 + o pyramid Average Regions
1 - m sign Guide Objects
2 + x sign Dimensions
2 + o sign Comments
2 + x sign Guidelines
2 + o sign Line Grids
2 . o sign Visual Objects
2 + o sign Background Layers
1 - m cubesColor General
2 + o cubesColor Grid
2 + x cubesColor Coordinate Info on Cursor
2 + x cubesColor Axis System
2 . x cubesColor Show Hidden Objects in Background
2 + o cubesColor Center of gravity
1 - x numbers Numbering
2 . x numbers Nodes
2 . x numbers Lines
2 + x numbers Surfaces
2 . x numbers Solids
2 . x numbers Solid Orthotropies
2 . x numbers Openings
2 . x numbers Nodal Supports
2 . x numbers Line Supports
2 + x numbers Members
2 . x numbers Sets of Members
2 . x numbers Nodal Constraints
2 + o numbers FE Mesh
2 . x numbers Guidelines
1 - m ruler Colors in Graphics According to
2 . R ruler Standard
2 . r ruler Material
2 . r ruler Cross-Section
2 . r ruler Member Type
2 . r ruler Member Hinge
2 . r ruler Surface Type - Geometry
2 . r ruler Surface Type - Stiffness
2 . r ruler Surface Thickness
2 . r ruler +/- z Surface Side`.trim().split('\n').map(l => l.split(' '));

document.getElementById('tree').innerHTML = tree.map(([level, exp, state, icon, ...words], i) => {
    const next = tree[i + 1];
    const cls = level === '1' ? 'top' : (next && next[0] === '1' ? 'end' : '');
    const radio = /r/i.test(state);
    const box = exp === '.'
        ? '<span class="stub"></span>'
        : `<button class="exp" aria-label="Expand"><svg viewBox="0 0 9 9"><rect x=".5" y=".5" width="8" height="8" rx="1" fill="#f4f4f4" stroke="#999"/><path d="M2 4.500h5${exp === '+' ? 'M4.500 2v5' : ''}" stroke="#25408f"/></svg></button>`;
    return `<div class="row ${cls}">${box}<input id="t${i}" type="${radio ? 'radio' : 'checkbox'}" ${radio ? 'name="colors"' : ''} ${/[xR]/.test(state) ? 'checked' : ''} class="${state === 'm' ? 'mixed' : ''}">${svg(icon, 'pic')}<label for="t${i}">${words.join(' ')}</label></div>`;
}).join('');

// node table
const nodes = {
    11: ['11.600', '0.000'], 12: ['17.000', '0.000'], 13: ['0.000', '5.185'], 14: ['6.200', '0.000'],
    15: ['0.000', '8.200'], 16: ['4.000', '6.050'], 17: ['4.000', '10.050'], 18: ['8.450', '10.050']
};
let rows = '';
for (let n = 11; n <= 21; n++) {
    const c = nodes[n];
    rows += `<tr><th class="${n === 17 ? 'current' : ''}">${n}</th>`;
    rows += c
        ? `<td>Standard</td><td class="mid">0</td><td><u>C</u>artesian</td><td class="num ${n === 17 ? 'focus' : ''}">${c[0]}</td><td class="num">${c[1]}</td><td class="num">0.000</td><td>${n > 15 ? 'Help node for dimension' : ''}</td>`
        : '<td></td>'.repeat(6) + '<td class="empty"></td>';
    rows += '</tr>';
}
document.getElementById('rows').innerHTML = rows;

// FE mesh, pulled towards the column heads
const step = 30.25;
const bell = (d, w) => Math.exp(-d * d / (w * w));
const pullX = { 881: -5, 850: -2, 1183: 1, 1213: 3, 1244: 7, 1274: 10, 1304: 15, 1334: 8, 1365: 4, 1395: 2 };
const pullY = { 5: -7, 4: -4, 3: -2, 6: -2, 7: -1 };
let mesh = '';
for (let i = 0; i < 90; i++) {
    const x = 457.5 + i * step;
    const pull = pullX[Math.floor(x)] || 0;
    let d = '';
    for (let y = 96; y <= 1100; y += 10) {
        const px = pull ? x + pull * bell(y - 507, 75) : Math.floor(x) + .5;
        d += `${d ? 'L' : 'M'}${px.toFixed(1)} ${y}`;
    }
    mesh += `<path d="${d}" class="${i % 2 ? 'dotted' : ''}"/>`;
}
for (let j = -8; j < 28; j++) {
    const y = Math.round(345 + j * 30.3) + .5;
    const pull = pullY[j] || 0;
    let d = '';
    for (let x = 428; x <= 3100; x += 15) {
        const left = y > 240 ? 5 * Math.max(0, 1 - (x - 428) / 170) ** 2 : 0;
        const py = y + left + pull * (bell(x - 895, 60) + bell(x - 1302, 60));
        d += `${d ? 'L' : 'M'}${x} ${py.toFixed(1)}`;
    }
    mesh += `<path d="${d}" class="${j % 2 ? 'dotted' : ''}"/>`;
}
document.getElementById('mesh').innerHTML = mesh;

const offset = document.getElementById('offset');
offset.focus();
offset.select();
```
